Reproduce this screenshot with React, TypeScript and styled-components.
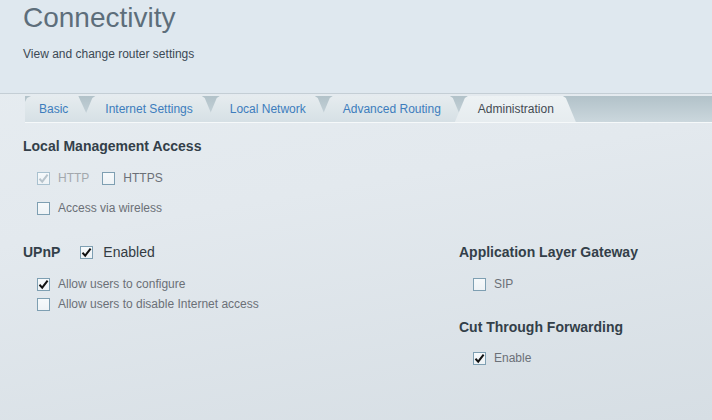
import React from "react";
import styled, { createGlobalStyle } from "styled-components";

const Global = createGlobalStyle`
  html, body { margin: 0; padding: 0; }
  body { font-family: "Liberation Sans", Arial, sans-serif; }
`;

const Page = styled.div`
  width: 712px;
  height: 420px;
  overflow: hidden;
  background: linear-gradient(170deg, #e7edf1 0%, #e3e9ee 45%, #d6dee4 100%);
`;

const Header = styled.header`
  height: 93px;
  padding-left: 23px;
  background: #dfe8ef;
  border-bottom: 1px solid #c4ced5;
  box-sizing: content-box;
  overflow: hidden;
`;

const Title = styled.h1`
  margin: 0;
  padding-top: 1px;
  font-size: 28px;
  line-height: 34px;
  font-weight: normal;
  color: #5d6e7b;
`;

const Subtitle = styled.p`
  margin: 12px 0 0;
  font-size: 12px;
  line-height: 14px;
  color: #3c4954;
`;

const TabBar = styled.nav`
  display: flex;
  margin: 2px 0 0 25px;
  height: 26px;
  background: linear-gradient(180deg, #b2c2c9 0%, #cbd7dd 100%);
  border-bottom: 1px solid #f6f9fa;
`;

const Tab = styled.div<{ $active?: boolean; $first?: boolean }>`
  position: relative;
  z-index: ${(p) => (p.$active ? 2 : 1)};
  display: flex;
  align-items: center;
  height: 26px;
  padding: 0 22px 0 ${(p) => (p.$first ? "14px" : "23px")};
  margin-left: ${(p) => (p.$first ? "0" : "-8px")};
  font-size: 12px;
  color: ${(p) => (p.$active ? "#444b52" : "#3d7dbd")};
  background: ${(p) =>
    p.$active
      ? "linear-gradient(180deg, #edf2f4 0%, #e6ecef 100%)"
      : "linear-gradient(180deg, #e6ecef 0%, #d6e0e5 100%)"};
  clip-path: ${(p) =>
    p.$first
      ? "polygon(0 100%, 0 6px, 2px 2px, 6px 0, calc(100% - 12px) 0, 100% 100%)"
      : "polygon(0 100%, 10px 2px, 13px 0, calc(100% - 13px) 0, calc(100% - 10px) 2px, 100% 100%)"};
  white-space: nowrap;
`;

const Content = styled.main`
  padding: 14px 0 0 23px;
`;

const Heading = styled.h2<{ $top?: number }>`
  margin: ${(p) => p.$top ?? 0}px 0 0;
  font-size: 14px;
  line-height: 18px;
  font-weight: bold;
  color: #333f49;
`;

const OptionRow = styled.div<{ $top?: number }>`
  display: flex;
  align-items: center;
  height: 20px;
  margin-top: ${(p) => p.$top ?? 0}px;
  padding-left: 14px;
`;

const Option = styled.label<{ $disabled?: boolean; $strong?: boolean }>`
  display: inline-flex;
  align-items: center;
  gap: ${(p) => (p.$strong ? "10px" : "8px")};
  margin-right: 13px;
  font-size: ${(p) => (p.$strong ? "14px" : "12px")};
  color: ${(p) => (p.$disabled ? "#a3a8ad" : p.$strong ? "#333b42" : "#6b7077")};
`;

const Box = styled.span<{ $disabled?: boolean }>`
  display: inline-flex;
  align-items: center;
  justify-content: center;
  width: 11px;
  height: 11px;
  border: 1px solid ${(p) => (p.$disabled ? "#a9c1cf" : "#7e9fb2")};
  background: linear-gradient(180deg, #f6f9fb 0%, #eef3f6 100%);
`;

const Columns = styled.div`
  display: grid;
  grid-template-columns: 436px 1fr;
  margin-top: 25px;
`;

const Column = styled.section``;

const InlineHead = styled.div`
  display: flex;
  align-items: center;
  height: 18px;
  gap: 20px;
`;

const Check = ({ color }: { color: string }) => (
  <svg width="11" height="11" viewBox="0 0 11 11">
    <path d="M1.5 5.8 L4.2 8.6 L9.6 1.6" fill="none" stroke={color} strokeWidth="2" />
  </svg>
);

const CheckBox = ({ checked, disabled }: { checked?: boolean; disabled?: boolean }) => (
  <Box $disabled={disabled}>{checked && <Check color={disabled ? "#b8c4cc" : "#111"} />}</Box>
);

export default function App() {
  return (
    <Page>
      <Global />
      <Header>
        <Title>Connectivity</Title>
        <Subtitle>View and change router settings</Subtitle>
      </Header>
      <TabBar>
        <Tab $first>Basic</Tab>
        <Tab>Internet Settings</Tab>
        <Tab>Local Network</Tab>
        <Tab>Advanced Routing</Tab>
        <Tab $active>Administration</Tab>
      </TabBar>
      <Content>
        <Heading>Local Management Access</Heading>
        <OptionRow $top={13}>
          <Option $disabled>
            <CheckBox checked disabled />
            HTTP
          </Option>
          <Option>
            <CheckBox />
            HTTPS
          </Option>
        </OptionRow>
        <OptionRow $top={10}>
          <Option>
            <CheckBox />
            Access via wireless
          </Option>
        </OptionRow>
        <Columns>
          <Column>
            <InlineHead>
              <Heading>UPnP</Heading>
              <Option $strong>
                <CheckBox checked />
                Enabled
              </Option>
            </InlineHead>
            <OptionRow $top={13}>
              <Option>
                <CheckBox checked />
                Allow users to configure
              </Option>
            </OptionRow>
            <OptionRow>
              <Option>
                <CheckBox />
                Allow users to disable Internet access
              </Option>
            </OptionRow>
          </Column>
          <Column>
            <Heading>Application Layer Gateway</Heading>
            <OptionRow $top={13}>
              <Option>
                <CheckBox />
                SIP
              </Option>
            </OptionRow>
            <Heading $top={24}>Cut Through Forwarding</Heading>
            <OptionRow $top={12}>
              <Option>
                <CheckBox checked />
                Enable
              </Option>
            </OptionRow>
          </Column>
        </Columns>
      </Content>
    </Page>
  );
}
